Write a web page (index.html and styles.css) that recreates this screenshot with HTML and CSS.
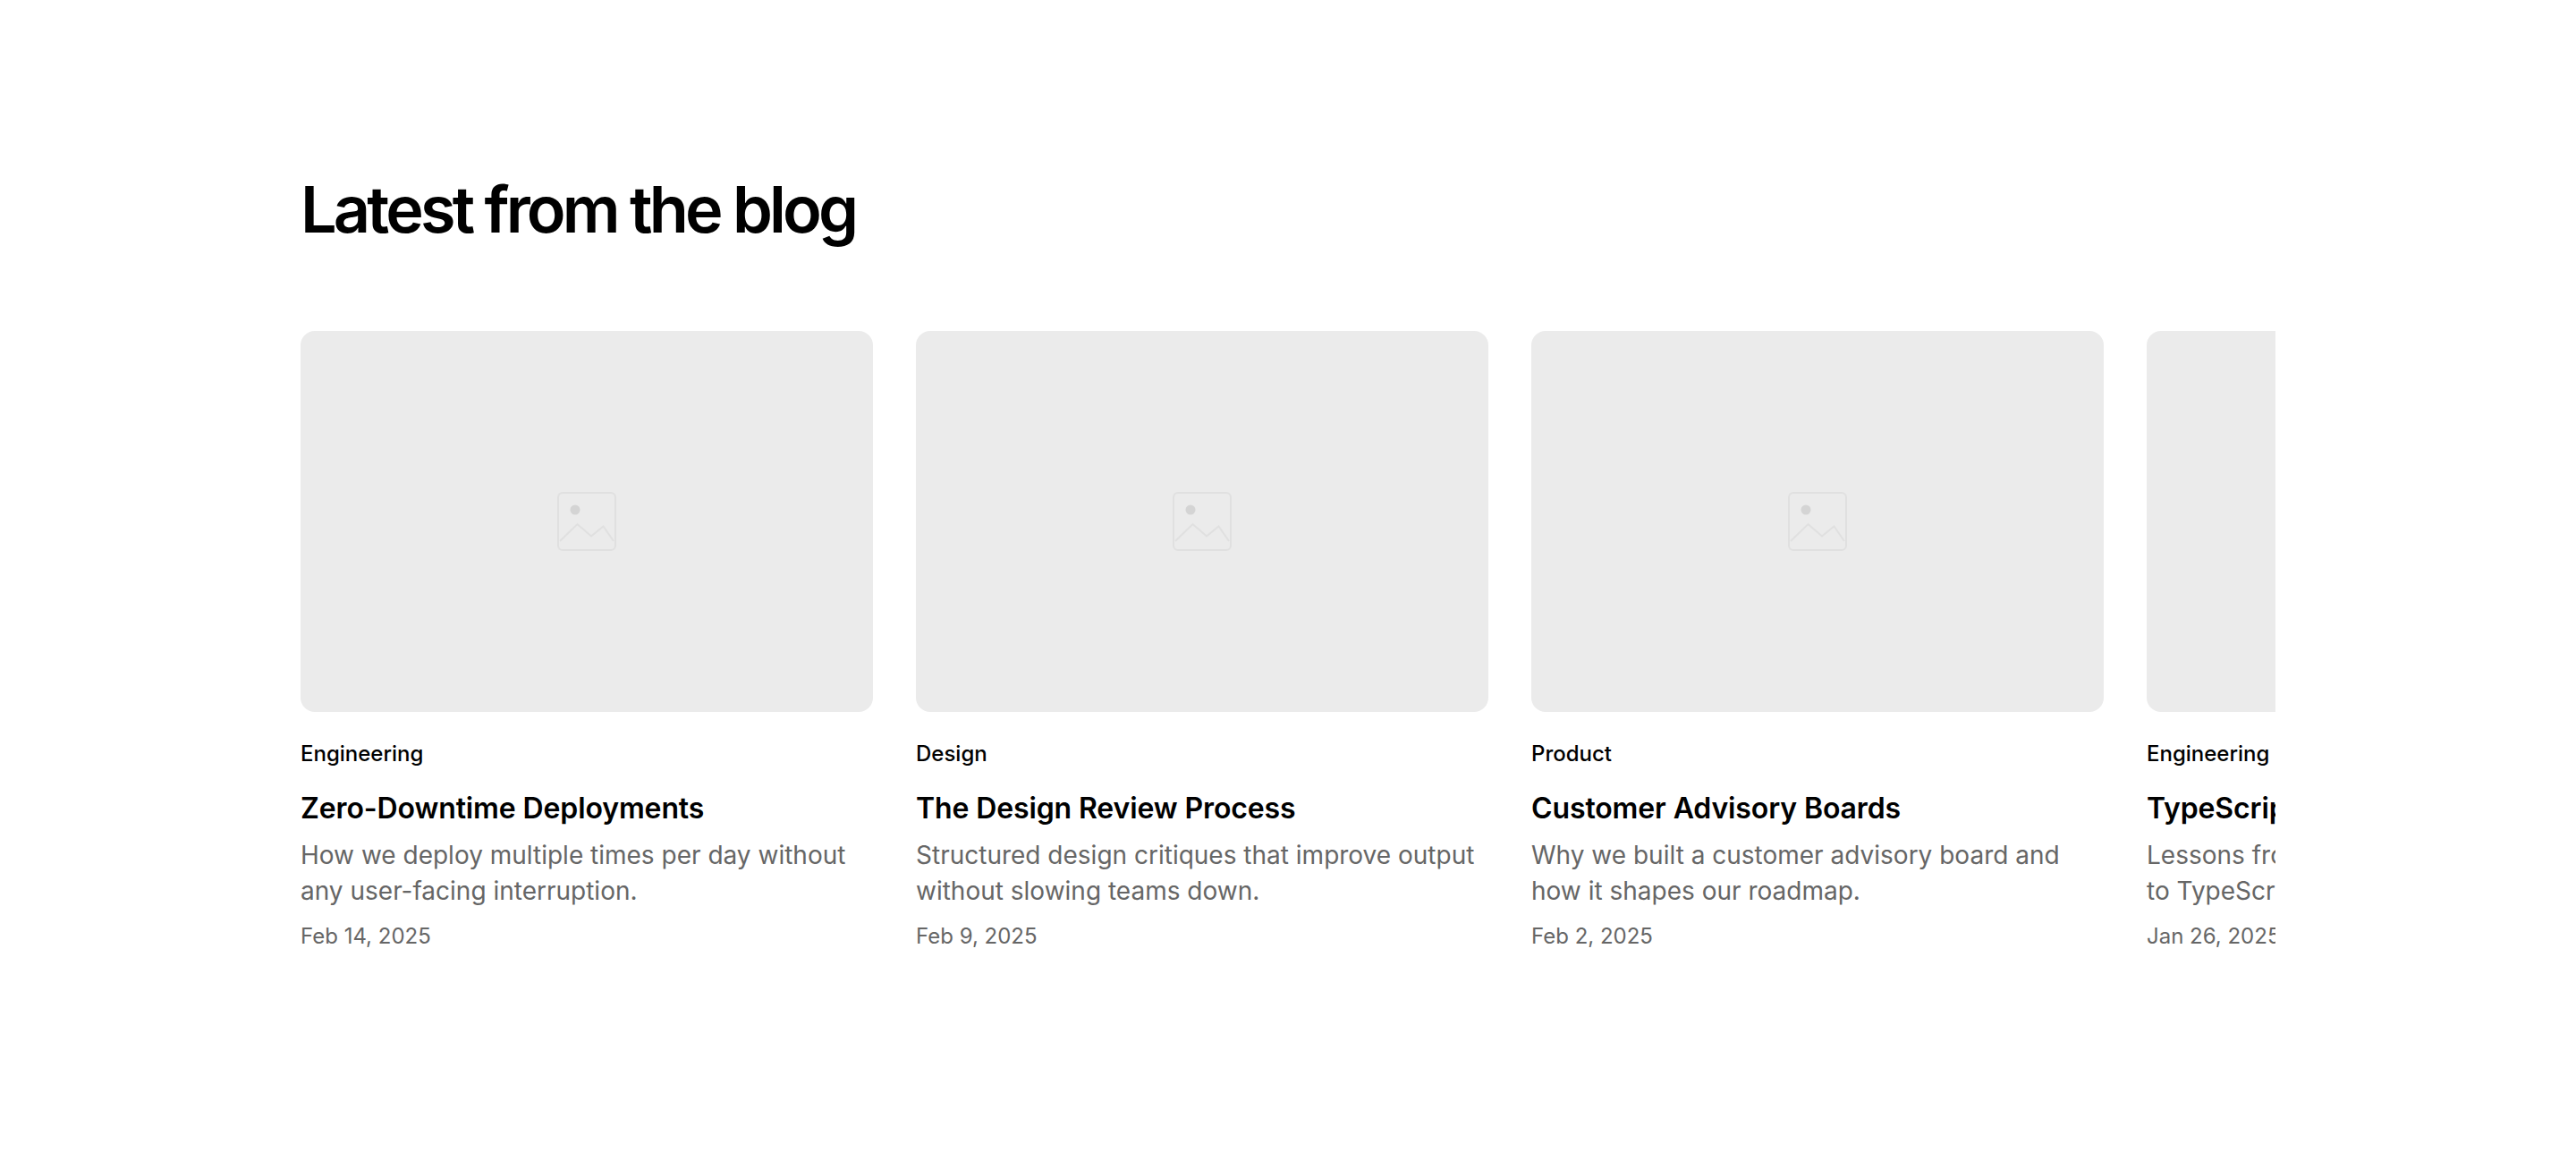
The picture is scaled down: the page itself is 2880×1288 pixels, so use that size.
FILE: index.html
```html
<!DOCTYPE html>
<html lang="en">
<head>
  <meta charset="UTF-8">
  <title>Latest from the blog</title>
  <link rel="stylesheet" href="styles.css">
</head>
<body>
  <section class="blog">
    <h1>Latest from the blog</h1>
    <div class="track">
      <article class="card">
        <div class="thumb">
          <svg class="thumb-icon" viewBox="0 0 66 66"><rect class="frame" x="1" y="1" width="64" height="64" rx="5"/><circle class="sun" cx="20" cy="20" r="5.5"/><polyline class="hills" points="3,55 22.5,36 38,49.5 51.5,38.5 63,55"/></svg>
        </div>
        <div class="tag">Engineering</div>
        <h2>Zero-Downtime Deployments</h2>
        <p>How we deploy multiple times per day without any user-facing interruption.</p>
        <div class="date">Feb 14, 2025</div>
      </article>
      <article class="card">
        <div class="thumb">
          <svg class="thumb-icon" viewBox="0 0 66 66"><rect class="frame" x="1" y="1" width="64" height="64" rx="5"/><circle class="sun" cx="20" cy="20" r="5.5"/><polyline class="hills" points="3,55 22.5,36 38,49.5 51.5,38.5 63,55"/></svg>
        </div>
        <div class="tag">Design</div>
        <h2>The Design Review Process</h2>
        <p>Structured design critiques that improve output without slowing teams down.</p>
        <div class="date">Feb 9, 2025</div>
      </article>
      <article class="card">
        <div class="thumb">
          <svg class="thumb-icon" viewBox="0 0 66 66"><rect class="frame" x="1" y="1" width="64" height="64" rx="5"/><circle class="sun" cx="20" cy="20" r="5.5"/><polyline class="hills" points="3,55 22.5,36 38,49.5 51.5,38.5 63,55"/></svg>
        </div>
        <div class="tag">Product</div>
        <h2>Customer Advisory Boards</h2>
        <p>Why we built a customer advisory board and how it shapes our roadmap.</p>
        <div class="date">Feb 2, 2025</div>
      </article>
      <article class="card">
        <div class="thumb">
          <svg class="thumb-icon" viewBox="0 0 66 66"><rect class="frame" x="1" y="1" width="64" height="64" rx="5"/><circle class="sun" cx="20" cy="20" r="5.5"/><polyline class="hills" points="3,55 22.5,36 38,49.5 51.5,38.5 63,55"/></svg>
        </div>
        <div class="tag">Engineering</div>
        <h2>TypeScript at Scale</h2>
        <p>Lessons from migrating a million-line codebase to TypeScript.</p>
        <div class="date">Jan 26, 2025</div>
      </article>
    </div>
  </section>
</body>
</html>
```

FILE: styles.css
```css
* { box-sizing: border-box; }
body {
  margin: 0;
  background: #fff;
  color: #000;
  font-family: Inter, sans-serif;
}
.blog {
  width: 2208px;
  margin: 0 auto;
  padding: 192px 0 0;
}
h1 {
  margin: 0 0 94px;
  font-size: 72px;
  line-height: 84px;
  font-weight: 600;
  letter-spacing: -3.85px;
}
.track {
  display: flex;
  gap: 48px;
  overflow: hidden;
}
.card {
  flex: 0 0 640px;
}
.thumb {
  display: flex;
  align-items: center;
  justify-content: center;
  height: 426px;
  margin-bottom: 31px;
  background: #ebebeb;
  border-radius: 16px;
}
.thumb-icon {
  width: 66px;
  height: 66px;
}
.frame, .hills {
  fill: none;
  stroke: #e0e0e0;
  stroke-width: 2;
}
.sun { fill: #d4d4d4; }
.tag {
  margin-bottom: 25px;
  font-size: 24px;
  line-height: 32px;
  font-weight: 500;
}
h2 {
  margin: 0 0 12px;
  font-size: 32px;
  line-height: 40px;
  font-weight: 600;
  letter-spacing: -0.12px;
}
p {
  margin: 0 0 15px;
  font-size: 28px;
  line-height: 40px;
  color: #666;
}
.date {
  font-size: 24px;
  line-height: 32px;
  color: #666;
}
```
